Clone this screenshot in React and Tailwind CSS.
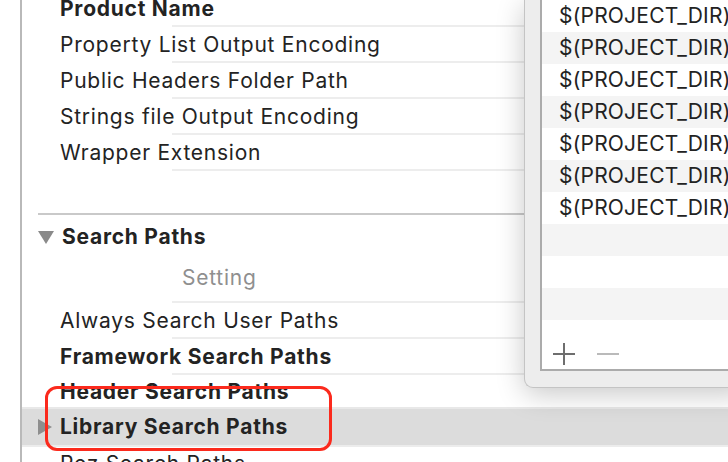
import React from "react";

const font = "font-['Inter','Liberation_Sans',sans-serif]";
const txt = "text-[21px] tracking-[0.75px] whitespace-nowrap";

function Row({ label, bold }) {
  return (
    <>
      <div className="h-[34px] flex items-center pl-[38px] pt-[1px]">
        <span className={`${txt} text-[#232323] ${bold ? "font-bold" : "font-normal"}`}>{label}</span>
      </div>
      <div className="ml-[150px] h-[2px] bg-[#ededed]" />
    </>
  );
}

function DownTriangle() {
  return (
    <svg width="16" height="13" viewBox="0 0 16 13">
      <path d="M0 0 H16 L8 13 Z" fill="#8a8a8a" />
    </svg>
  );
}

function RightTriangle() {
  return (
    <svg width="14" height="16" viewBox="0 0 14 16">
      <path d="M0 0 L14 8 L0 16 Z" fill="#8e8e8e" />
    </svg>
  );
}

export default function App() {
  const paths = Array.from({ length: 10 }, (_, i) => (i < 7 ? "$(PROJECT_DIR)" : ""));

  return (
    <div className={`relative w-[728px] h-[462px] overflow-hidden bg-white ${font}`}>
      {/* settings list */}
      <div className="ml-[20px] h-[480px] border-l-2 border-[#b9b9b9] -mt-[9px]">
        <Row label="Product Name" bold />
        <Row label="Property List Output Encoding" />
        <Row label="Public Headers Folder Path" />
        <Row label="Strings file Output Encoding" />
        <Row label="Wrapper Extension" />

        <div className="h-[42px]" />
        <div className="ml-[16px] h-[2px] bg-[#c9c9c9]" />

        <div className="h-[44px] flex items-center pl-[16px] gap-[8px]">
          <DownTriangle />
          <span className={`${txt} text-[#232323] font-bold`}>Search Paths</span>
        </div>

        <div className="h-[42px] flex items-center pl-[160px] pb-[5px]">
          <span className={`${txt} text-[#8f8f8f]`}>Setting</span>
        </div>
        <div className="ml-[150px] h-[2px] bg-[#ededed]" />

        <Row label="Always Search User Paths" />
        <Row label="Framework Search Paths" bold />
        <div className="h-[32px] flex items-center pl-[38px] pt-[1px]">
          <span className={`${txt} text-[#232323] font-bold`}>Header Search Paths</span>
        </div>
        <div className="h-[2px] bg-[#e8e8e8]" />
        <div className="h-[36px] bg-[#dcdcdc] flex items-center pl-[16px] gap-[8px]">
          <RightTriangle />
          <span className={`${txt} text-[#232323] font-bold`}>Library Search Paths</span>
        </div>
        <div className="h-[2px] bg-[#ececec]" />
        <div className="h-[34px] flex items-center pl-[38px]">
          <span className={`${txt} text-[#232323]`}>Rez Search Paths</span>
        </div>
      </div>

      {/* popover */}
      <div className="absolute left-[524px] top-0 -right-[20px] h-[388px] bg-[#ededed] border-l border-b border-[#c4c4c4] rounded-bl-[9px] pl-[15px] pb-[16px] shadow-[0_6px_28px_rgba(0,0,0,0.22)]">
        <div className="h-full bg-white border-l-2 border-b-2 border-[#ababab] flex flex-col">
          {paths.map((p, i) => (
            <div
              key={i}
              className={`h-[32px] shrink-0 flex items-center pl-[17px] ${i % 2 === 1 ? "bg-[#f4f4f4]" : "bg-white"}`}
            >
              <span className="text-[21px] tracking-[0.2px] whitespace-nowrap text-[#222]">{p}</span>
            </div>
          ))}
          <div className="flex-1 flex items-center pl-[11px] gap-[22px] pt-[18px]">
            <svg width="22" height="22" viewBox="0 0 22 22">
              <path d="M11 0 V22 M0 11 H22" stroke="#6e6e6e" strokeWidth="2" />
            </svg>
            <svg width="22" height="22" viewBox="0 0 22 22">
              <path d="M0 11 H22" stroke="#bababa" strokeWidth="2" />
            </svg>
          </div>
        </div>
      </div>

      {/* red highlight box */}
      <div className="absolute left-[45px] top-[386px] w-[287px] h-[65px] border-[3px] border-[#fb2a1d] rounded-[12px]" />
    </div>
  );
}
